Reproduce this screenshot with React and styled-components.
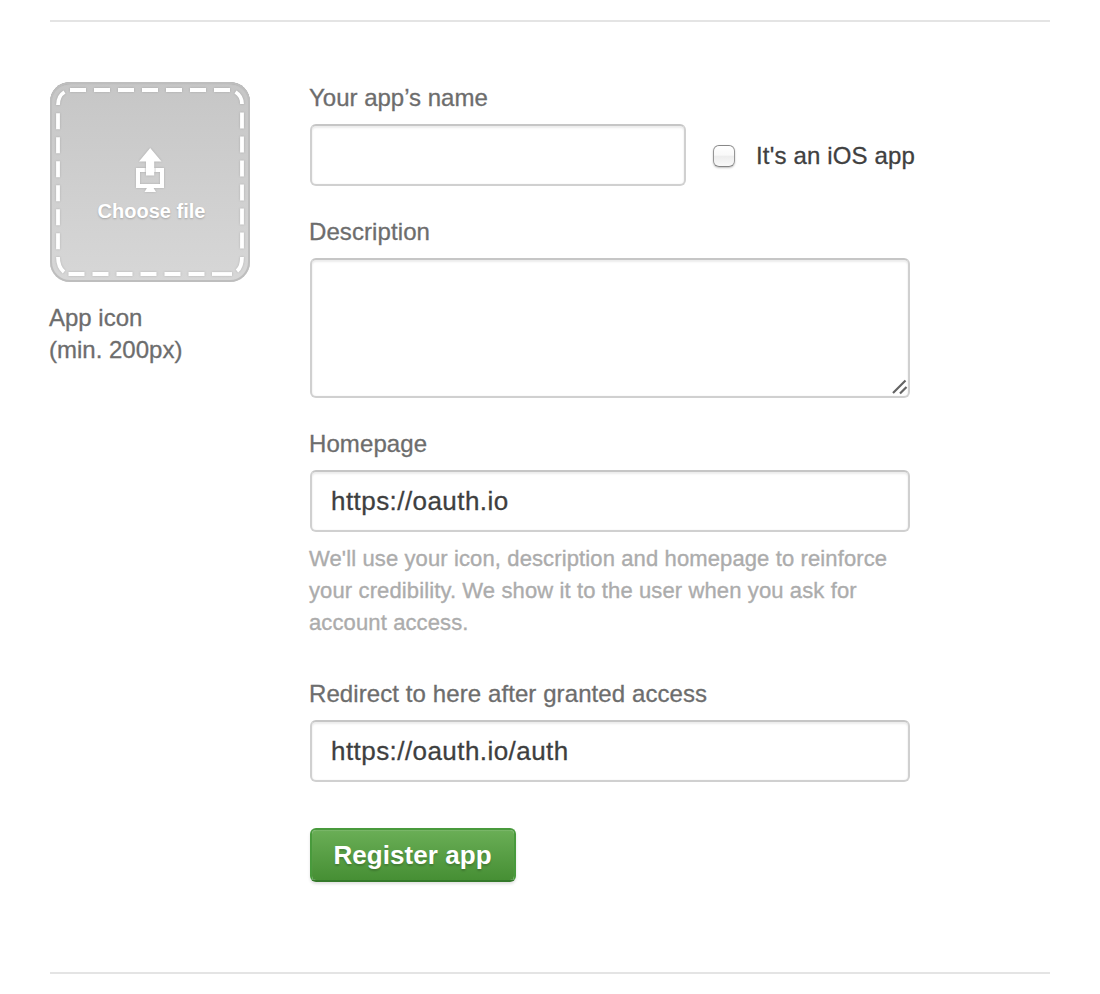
import React from "react";
import styled, { createGlobalStyle } from "styled-components";

const GlobalStyle = createGlobalStyle`
  *, *::before, *::after { box-sizing: border-box; }
  body {
    margin: 0;
    background: #fff;
    color: #6d6d6d;
    font: 24px/32px "Liberation Sans", Arial, sans-serif;
  }
`;

const Page = styled.main`
  height: 994px;
  padding: 20px 50px;
`;

const Form = styled.form`
  display: flex;
  gap: 60px;
  height: 954px;
  padding-top: 60px;
  border-top: 2px solid #e4e4e4;
  border-bottom: 2px solid #e4e4e4;
`;

const IconColumn = styled.div`
  flex: 0 0 200px;
`;

const UploadTile = styled.div`
  position: relative;
  display: flex;
  flex-direction: column;
  align-items: center;
  width: 200px;
  height: 200px;
  padding-top: 117px;
  border-radius: 20px;
  background: linear-gradient(#c6c6c6, #d7d7d7);
  box-shadow: inset 0 0 0 2px #bebebe, inset 0 2px 1px #a8a8a8;
`;

const TileArt = styled.svg`
  position: absolute;
  inset: 0;
  filter: drop-shadow(0 0 1px rgba(0, 0, 0, 0.16));
`;

const TileText = styled.span`
  margin-left: 3px;
  color: #fff;
  font-size: 20px;
  font-weight: bold;
  line-height: 24px;
  text-shadow: 0 1px 2px rgba(0, 0, 0, 0.22);
`;

const Caption = styled.p`
  margin: 20px 0 0 -1px;
  -webkit-text-stroke: 0.3px;
`;

const Fields = styled.div`
  display: flex;
  flex-direction: column;
  align-items: flex-start;
  width: 600px;
`;

const Field = styled.div`
  width: 100%;
  margin-bottom: ${(p) => p.$after ?? 30}px;
`;

const Label = styled.label`
  display: block;
  margin: 0 0 10px -1px;
  letter-spacing: ${(p) => p.$tracking ?? 0.09}px;
  -webkit-text-stroke: 0.3px;
`;

const Row = styled.div`
  display: flex;
  align-items: center;
`;

const Input = styled.input`
  display: block;
  flex-shrink: 0;
  width: ${(p) => p.$width || "100%"};
  height: 62px;
  padding: 0 19px;
  border: 2px solid #d0d0d0;
  border-top-color: #c6c6c6;
  border-radius: 6px;
  outline: 0;
  background: #fff;
  box-shadow: inset 0 2px 2px #ececec, inset 0 0 2px #eee;
  color: #3e3f3f;
  font: 26px "Liberation Sans", Arial, sans-serif;
  letter-spacing: 0.44px;
  -webkit-text-stroke: 0.3px;
`;

const AreaWrap = styled.div`
  position: relative;
  height: 140px;
`;

const TextArea = styled(Input).attrs({ as: "textarea" })`
  height: 140px;
  padding: 14px 18px;
  resize: none;
`;

const Grip = styled.svg`
  position: absolute;
  right: 2px;
  bottom: 2px;
`;

const CheckLabel = styled.label`
  display: flex;
  align-items: center;
  gap: 21px;
  margin-left: 27px;
  padding-top: 2px;
  color: #404040;
  letter-spacing: 0.16px;
  white-space: nowrap;
  -webkit-text-stroke: 0.3px;
`;

const Checkbox = styled.input.attrs({ type: "checkbox" })`
  appearance: none;
  width: 22px;
  height: 22px;
  margin: 0;
  border: 1px solid #969696;
  border-top-color: #888;
  border-bottom-color: #858585;
  border-radius: 6px;
  background: linear-gradient(#fff 0%, #f9f9f9 45%, #ededed 52%, #f9f9f9 100%);
  box-shadow: 0 1px 2px rgba(0, 0, 0, 0.25);
`;

const Hint = styled.p`
  margin: 11px 0 0 -1px;
  color: #acacac;
  font-size: 22px;
  letter-spacing: 0.12px;
  white-space: nowrap;
  -webkit-text-stroke: 0.35px;
`;

const Submit = styled.button`
  width: 206px;
  height: 54px;
  padding: 1px 1px 0 0;
  border: 2px solid #489a3c;
  border-bottom-color: #34792a;
  border-radius: 6px;
  background: linear-gradient(#6aae56, #468f34) padding-box;
  box-shadow: inset 0 1px 1px rgba(255, 255, 255, 0.12), 0 2px 3px rgba(0, 0, 0, 0.12);
  color: #fff;
  font: bold 26px "Liberation Sans", Arial, sans-serif;
  letter-spacing: 0.06px;
  text-shadow: 0 2px 2px rgba(0, 0, 0, 0.18);
`;

function UploadArt() {
  return (
    <TileArt width="200" height="200" viewBox="0 0 200 200" fill="none">
      <g stroke="#fff" strokeWidth="3.8">
        <path d="M20 8H180M18.5 192H162" strokeDasharray="16 8" />
        <path d="M162 192H182" />
        <path d="M8 31.3V168M192 30.5V168" strokeDasharray="16 8" />
        <path d="M8 23Q8 14 14.5 10M185.5 10Q192 14 192 22M8 175Q8 185 14 190M192 175Q192 185 187 189" />
      </g>
      <path d="M88 88H112V104H88Z" stroke="#fff" strokeWidth="4" />
      <path d="M95.300 86V90M105 86V90" stroke="#d0d0d0" />
      <path d="M100.200 66L111.500 79.500H104.200V93.500H96V79.500H89Z" fill="#fff" />
      <path d="M97.500 105H103L106 110H94.500Z" fill="#fff" />
    </TileArt>
  );
}

export default function App() {
  return (
    <>
      <GlobalStyle />
      <Page>
        <Form onSubmit={(e) => e.preventDefault()}>
          <IconColumn>
            <UploadTile>
              <UploadArt />
              <TileText>Choose file</TileText>
            </UploadTile>
            <Caption>
              App icon
              <br />
              (min. 200px)
            </Caption>
          </IconColumn>
          <Fields>
            <Field>
              <Label htmlFor="name" $tracking={0}>Your app’s name</Label>
              <Row>
                <Input id="name" $width="376px" />
                <CheckLabel>
                  <Checkbox />
                  It's an iOS app
                </CheckLabel>
              </Row>
            </Field>
            <Field>
              <Label htmlFor="description">Description</Label>
              <AreaWrap>
                <TextArea id="description" />
                <Grip width="18" height="18" viewBox="0 0 18 18" stroke="#646464" strokeWidth="2.2">
                  <path d="M3 15L15.500 2.500M10 15.500L16.500 9" />
                </Grip>
              </AreaWrap>
            </Field>
            <Field $after={39}>
              <Label htmlFor="homepage">Homepage</Label>
              <Input id="homepage" defaultValue="https://oauth.io" />
              <Hint>
                We'll use your icon, description and homepage to reinforce
                <br />
                your credibility. We show it to the user when you ask for
                <br />
                account access.
              </Hint>
            </Field>
            <Field $after={46}>
              <Label htmlFor="redirect">Redirect to here after granted access</Label>
              <Input id="redirect" defaultValue="https://oauth.io/auth" />
            </Field>
            <Submit>Register app</Submit>
          </Fields>
        </Form>
      </Page>
    </>
  );
}
